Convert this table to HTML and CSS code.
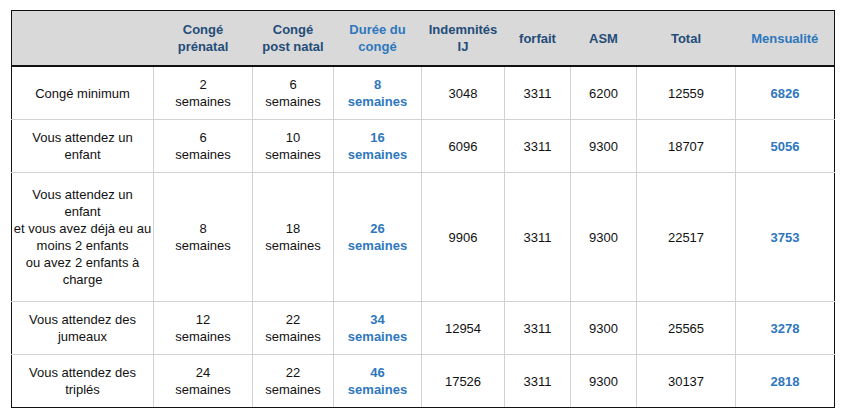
FILE: index.html
```html
<!DOCTYPE html>
<html lang="fr">
<head>
<meta charset="utf-8">
<title>Congé maternité</title>
<link rel="stylesheet" href="styles.css">
</head>
<body>
<table class="grid">
  <colgroup>
    <col class="c-label">
    <col class="c-pre">
    <col class="c-post">
    <col class="c-dur">
    <col class="c-ij">
    <col class="c-forf">
    <col class="c-asm">
    <col class="c-total">
    <col class="c-mens">
  </colgroup>
  <thead>
    <tr>
      <th></th>
      <th>Congé<br>prénatal</th>
      <th>Congé<br>post natal</th>
      <th class="hl">Durée du<br>congé</th>
      <th>Indemnités<br>IJ</th>
      <th>forfait</th>
      <th>ASM</th>
      <th>Total</th>
      <th class="hl">Mensualité</th>
    </tr>
  </thead>
  <tbody>
    <tr>
      <td class="label">Congé minimum</td>
      <td>2<br>semaines</td>
      <td>6<br>semaines</td>
      <td class="hl">8<br>semaines</td>
      <td>3048</td>
      <td>3311</td>
      <td>6200</td>
      <td>12559</td>
      <td class="hl">6826</td>
    </tr>
    <tr>
      <td class="label">Vous attendez un<br>enfant</td>
      <td>6<br>semaines</td>
      <td>10<br>semaines</td>
      <td class="hl">16<br>semaines</td>
      <td>6096</td>
      <td>3311</td>
      <td>9300</td>
      <td>18707</td>
      <td class="hl">5056</td>
    </tr>
    <tr class="tall">
      <td class="label">Vous attendez un<br>enfant<br>et vous avez déjà eu au<br>moins 2 enfants<br>ou avez 2 enfants à<br>charge</td>
      <td>8<br>semaines</td>
      <td>18<br>semaines</td>
      <td class="hl">26<br>semaines</td>
      <td>9906</td>
      <td>3311</td>
      <td>9300</td>
      <td>22517</td>
      <td class="hl">3753</td>
    </tr>
    <tr>
      <td class="label">Vous attendez des<br>jumeaux</td>
      <td>12<br>semaines</td>
      <td>22<br>semaines</td>
      <td class="hl">34<br>semaines</td>
      <td>12954</td>
      <td>3311</td>
      <td>9300</td>
      <td>25565</td>
      <td class="hl">3278</td>
    </tr>
    <tr>
      <td class="label">Vous attendez des<br>triplés</td>
      <td>24<br>semaines</td>
      <td>22<br>semaines</td>
      <td class="hl">46<br>semaines</td>
      <td>17526</td>
      <td>3311</td>
      <td>9300</td>
      <td>30137</td>
      <td class="hl">2818</td>
    </tr>
  </tbody>
</table>
</body>
</html>
```

FILE: styles.css
```css
html, body {
  margin: 0;
  background: #fff;
}
body {
  padding: 10px 0 0 11px;
  font-family: "Liberation Sans", Arial, sans-serif;
  font-size: 13px;
  line-height: 17px;
  color: #111;
}
.grid {
  border-collapse: collapse;
  table-layout: fixed;
  width: 824px;
  border: 1px solid #111;
}
.c-label { width: 142px; }
.c-pre { width: 99px; }
.c-post { width: 81px; }
.c-dur { width: 88px; }
.c-ij { width: 83px; }
.c-forf { width: 66px; }
.c-asm { width: 66px; }
.c-total { width: 99px; }
.c-mens { width: 99px; }

.grid th {
  background: #d9d9d9;
  color: #244c78;
  font-weight: bold;
  text-align: center;
  vertical-align: middle;
  padding: 10px 2px 10px;
  border-bottom: 2px solid #111;
}
.grid th.hl {
  color: #2e77bd;
}
.grid td {
  text-align: center;
  vertical-align: middle;
  padding: 9px 3px;
  border: 1px solid #d2d2d2;
}
.grid td.label {
  padding-left: 0;
  padding-right: 0;
  white-space: nowrap;
}
.grid tr > td:first-child { border-left: 1px solid #111; }
.grid tr > td:last-child { border-right: 1px solid #111; }
.grid tbody tr:last-child td { border-bottom: 1px solid #111; }
.grid td.hl {
  color: #2e77bd;
  font-weight: bold;
}
.grid tr.tall td {
  padding-top: 13px;
  padding-bottom: 13px;
}
```
